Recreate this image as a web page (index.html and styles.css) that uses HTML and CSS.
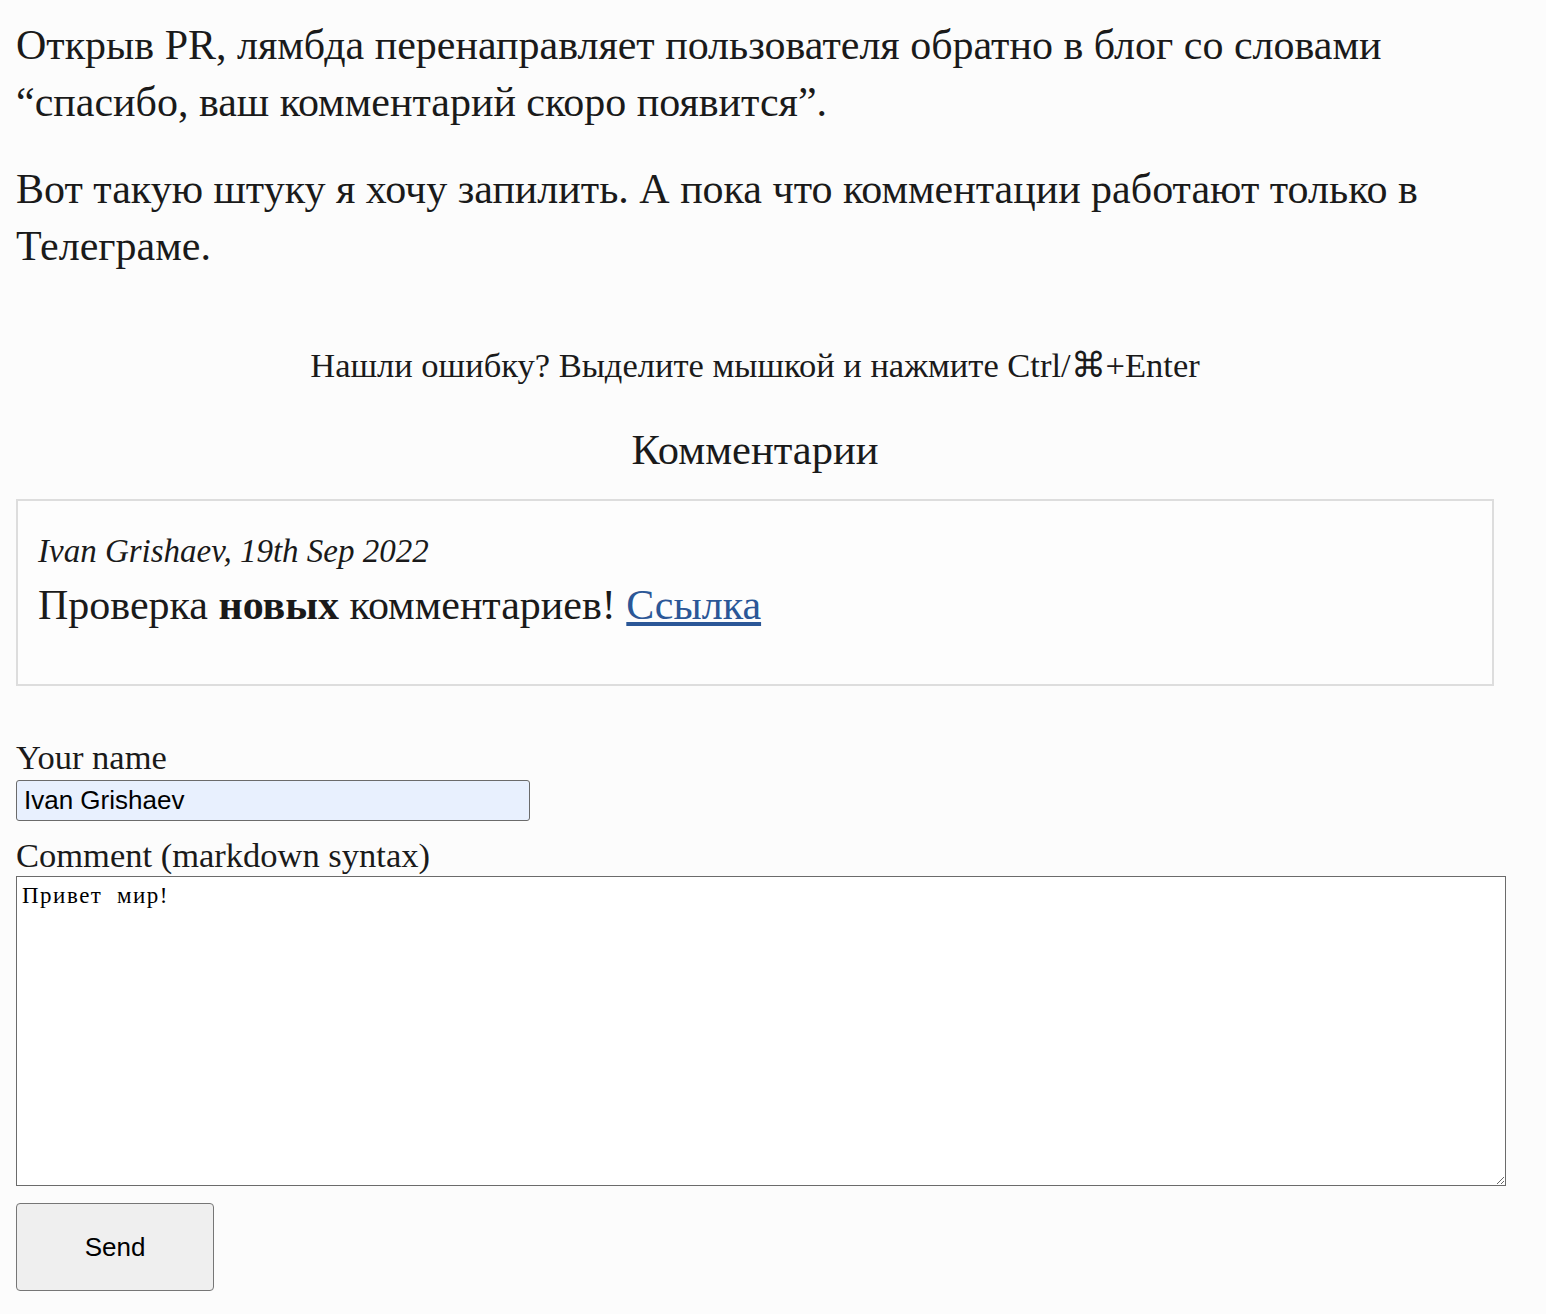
FILE: index.html
```html
<!DOCTYPE html>
<html lang="ru">
<head>
<meta charset="utf-8">
<title>Комментарии</title>
<link rel="stylesheet" href="styles.css">
</head>
<body>
<main class="page">
  <article class="article">
    <p>Открыв PR, лямбда перенаправляет пользователя обратно в блог со словами “спасибо, ваш комментарий скоро появится”.</p>
    <p>Вот такую штуку я хочу запилить. А пока что комментации работают только в Телеграме.</p>
  </article>
  <div class="typo">Нашли ошибку? Выделите мышкой и нажмите Ctrl/⌘+Enter</div>
  <h2 class="comments-title">Комментарии</h2>
  <div class="comment">
    <div class="comment-meta">Ivan Grishaev, 19th Sep 2022</div>
    <p class="comment-body">Проверка <strong>новых</strong> комментариев! <a href="#">Ссылка</a></p>
  </div>
  <form class="comment-form">
    <label class="field-label" for="name">Your name</label>
    <input class="name-input" id="name" type="text" value="Ivan Grishaev">
    <label class="field-label" for="text">Comment (markdown syntax)</label>
    <textarea class="comment-input" id="text">Привет  мир!</textarea>
    <button class="send-btn" type="button">Send</button>
  </form>
</main>
</body>
</html>
```
FILE: styles.css
```css
html, body {
  margin: 0;
  padding: 0;
  background: #fcfcfc;
}
body {
  color: #1a1a1a;
  font-family: "Liberation Serif", "Times New Roman", serif;
}
.page {
  width: 1478px;
  padding: 17px 0 0 16px;
  display: flex;
  flex-direction: column;
}
.article p {
  font-size: 42px;
  line-height: 57px;
  margin: 0 0 30px;
}
.typo {
  text-align: center;
  font-size: 34.5px;
  line-height: 48px;
  margin-top: 36px;
}
.comments-title {
  text-align: center;
  font-weight: normal;
  font-size: 42.5px;
  line-height: 50px;
  margin: 36px 0 0;
}
.comment {
  margin-top: 24px;
  width: 1478px;
  box-sizing: border-box;
  border: 2px solid #dddddd;
  background: #fdfdfd;
  padding: 26px 20px 50px;
}
.comment-meta {
  font-style: italic;
  font-size: 33px;
  line-height: 48px;
}
.comment-body {
  margin: 2px 0 0;
  font-size: 42px;
  line-height: 57px;
}
.comment-body a {
  color: #2b5797;
}
.comment-form {
  display: flex;
  flex-direction: column;
  align-items: flex-start;
  margin-top: 51px;
}
.field-label {
  font-size: 34.5px;
  line-height: 40px;
}
.name-input {
  margin: 3px 0 14px;
  width: 514px;
  height: 41px;
  box-sizing: border-box;
  border: 1.5px solid #6b6b6b;
  border-radius: 3px;
  background: #e8f0fe;
  padding: 0 7px;
  font-family: "Liberation Sans", Arial, sans-serif;
  font-size: 26px;
  color: #000;
}
.comment-input {
  margin-top: 1px;
  width: 1490px;
  height: 310px;
  box-sizing: border-box;
  border: 1.5px solid #6b6b6b;
  background: #fff;
  padding: 6px 5px;
  font-family: "Liberation Serif", "Times New Roman", serif;
  font-size: 23px;
  letter-spacing: 1.5px;
  word-spacing: 0;
  color: #000;
}
.send-btn {
  margin-top: 17px;
  width: 198px;
  height: 88px;
  border: 1.5px solid #767676;
  border-radius: 4px;
  background: #efefef;
  font-family: "Liberation Sans", Arial, sans-serif;
  font-size: 26px;
  color: #000;
}
```
